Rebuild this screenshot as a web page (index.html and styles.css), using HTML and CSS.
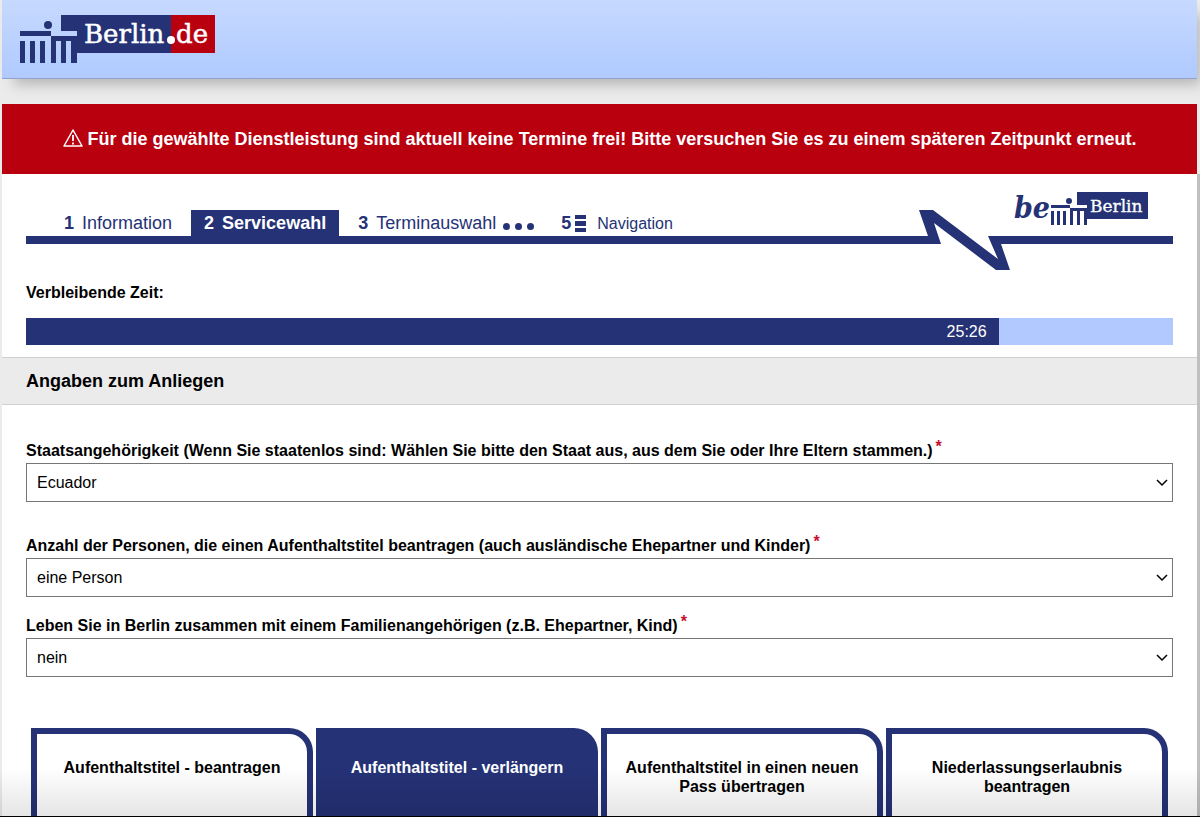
FILE: index.html
```html
<!DOCTYPE html>
<html lang="de">
<head>
    <meta charset="UTF-8">
    <meta name="viewport" content="width=device-width, initial-scale=1.0">
    <title>Servicewahl - Berlin.de</title>
    <link rel="stylesheet" href="styles.css">
</head>
<body>

    <header class="header">
        <a href="#" class="logo">
            <svg width="195" height="50" viewBox="0 0 195 50" role="img" aria-label="Berlin.de">
                <path class="blue" d="M41 1H151V39H57V49H51V27H46V49H41V27H36V49H31V22H57V17H41Z"/>
                <rect class="red" x="151" y="1" width="44" height="38"/>
                <circle class="blue" cx="28" cy="11" r="4"/>
                <path class="blue" d="M0 17H31V22H0ZM0 27H5V49H0ZM10 27H15V49H10ZM20 27H25V49H20Z"/>
                <text class="logo-text" x="64" y="29">Berlin</text>
                <circle class="white" cx="151" cy="26" r="4"/>
                <text class="logo-text" x="156" y="29">de</text>
            </svg>
        </a>
    </header>

    <div class="alert" role="alert">
        <svg class="alert-icon" width="20" height="20" viewBox="0 0 20 20" aria-hidden="true">
            <path d="M10 1L19 17H1Z" fill="none" stroke="#fff" stroke-width="1.500" stroke-linejoin="round"/>
            <path d="M10 6V12M10 13.500V15.500" stroke="#fff" stroke-width="1.800"/>
        </svg>
        <span>Für die gewählte Dienstleistung sind aktuell keine Termine frei! Bitte versuchen Sie es zu einem späteren Zeitpunkt erneut.</span>
    </div>

    <main class="content">
        <div class="progress-head">
            <nav class="steps">
                <a href="#" class="step"><b>1</b>Information</a>
                <a href="#" class="step active"><b>2</b>Servicewahl</a>
                <a href="#" class="step"><b>3</b>Terminauswahl</a>
                <span class="dots"><i></i><i></i><i></i></span>
                <a href="#" class="step step-nav"><b>5</b><svg width="11" height="17" viewBox="0 0 11 17" aria-hidden="true"><path class="blue" d="M0 0H11V4H0ZM0 6H11V11H0ZM0 13H11V17H0Z"/></svg>Navigation</a>
            </nav>
            <svg class="zigzag" width="91" height="60" viewBox="0 0 91 60" aria-hidden="true">
                <path class="blue" d="M0 26H9L0 0H14L79 49L69 26H91V34H82L91 60H77L15 13L22 34H0Z"/>
            </svg>
            <div class="be-berlin">
                <svg width="138" height="36" viewBox="0 0 138 36" role="img" aria-label="be Berlin">
                    <text class="be-text" x="3" y="28">be</text>
                    <path class="blue" d="M66 2H137V29H76V35H73V21H69V35H66V21H62V35H59V18H76V15H66Z"/>
                    <circle class="blue" cx="58" cy="11" r="3"/>
                    <path class="blue" d="M40 15H59V18H40ZM40 21H43V35H40ZM46 21H49V35H46ZM52 21H55V35H52Z"/>
                    <text class="be-name" x="79" y="22">Berlin</text>
                </svg>
            </div>
        </div>

        <div class="timer">
            <p class="timer-label">Verbleibende Zeit:</p>
            <div class="timer-bar">
                <div class="timer-fill" style="width: 84.8%;">25:26</div>
            </div>
        </div>

        <h2 class="section-title">Angaben zum Anliegen</h2>

        <form class="form">
            <div class="field field-wide">
                <label for="country">Staatsangehörigkeit (Wenn Sie staatenlos sind: Wählen Sie bitte den Staat aus, aus dem Sie oder Ihre Eltern stammen.)<span class="required">*</span></label>
                <div class="select-box">
                    <select id="country"><option>Ecuador</option></select>
                    <svg class="chevron" width="12" height="8" viewBox="0 0 12 8" aria-hidden="true"><path d="M1 1L6 6L11 1"/></svg>
                </div>
            </div>
            <div class="field">
                <label for="persons">Anzahl der Personen, die einen Aufenthaltstitel beantragen (auch ausländische Ehepartner und Kinder)<span class="required">*</span></label>
                <div class="select-box">
                    <select id="persons"><option>eine Person</option></select>
                    <svg class="chevron" width="12" height="8" viewBox="0 0 12 8" aria-hidden="true"><path d="M1 1L6 6L11 1"/></svg>
                </div>
            </div>
            <div class="field">
                <label for="family">Leben Sie in Berlin zusammen mit einem Familienangehörigen (z.B. Ehepartner, Kind)<span class="required">*</span></label>
                <div class="select-box">
                    <select id="family"><option>nein</option></select>
                    <svg class="chevron" width="12" height="8" viewBox="0 0 12 8" aria-hidden="true"><path d="M1 1L6 6L11 1"/></svg>
                </div>
            </div>

            <div class="services">
                <button type="button" class="service">Aufenthaltstitel - beantragen</button>
                <button type="button" class="service active">Aufenthaltstitel - verlängern</button>
                <button type="button" class="service">Aufenthaltstitel in einen neuen Pass übertragen</button>
                <button type="button" class="service">Niederlassungserlaubnis beantragen</button>
            </div>
        </form>
    </main>

</body>
</html>
```

FILE: styles.css
```css
* {
    box-sizing: border-box;
}
body {
    display: flex;
    flex-direction: column;
    min-height: 100vh;
    margin: 0;
    padding: 0 3px 0 2px;
    background-color: #ebebeb;
    font-family: "Liberation Sans", Arial, sans-serif;
    font-size: 16px;
    line-height: 19px;
    color: #000;
}
/* Schatten am unteren Rand */
body::after {
    content: "";
    position: fixed;
    left: 0;
    right: 0;
    bottom: 0;
    height: 48px;
    border-bottom: 1px solid #000;
    background: linear-gradient(rgba(0, 0, 0, 0), rgba(0, 0, 0, 0.1));
    pointer-events: none;
}
.blue {
    fill: #253276;
}
.red {
    fill: #b9000f;
}
.white {
    fill: #fff;
}

/* Kopfbereich */
.header {
    padding: 14px 18px;
    border-bottom: 1px solid #8fa3cc;
    background: linear-gradient(#c6d9ff, #b0caff);
    box-shadow: 8px 10px 12px -4px #b8b8b8;
}
.logo {
    display: block;
    width: 195px;
    height: 50px;
}
.logo-text {
    font-family: "DejaVu Serif", serif;
    font-size: 26px;
    fill: #fff;
    stroke: #fff;
    stroke-width: 0.5;
}
.alert {
    display: flex;
    align-items: center;
    justify-content: center;
    gap: 5px;
    margin-top: 25px;
    padding: 24px;
    background-color: #b9000f;
    color: #fff;
    font-size: 18px;
    font-weight: bold;
    line-height: 22px;
}
.alert-icon {
    flex: none;
}

/* Schritte */
.content {
    display: flex;
    flex: 1;
    flex-direction: column;
    background-color: #fff;
    box-shadow: 3px 0 0 #c0c0c0;
}
.progress-head {
    display: flex;
    align-items: flex-start;
    padding: 16px 24px 0;
}
.steps,
.be-berlin {
    height: 54px;
    border-bottom: 8px solid #253276;
}
.steps {
    display: flex;
    flex: 1;
    align-items: flex-end;
    padding-left: 25px;
}
.step {
    display: flex;
    align-items: center;
    gap: 8px;
    height: 26px;
    padding: 0 13px;
    margin-right: 6px;
    color: #253276;
    font-size: 18px;
    text-decoration: none;
}
.step.active {
    background-color: #253276;
    color: #fff;
    font-weight: bold;
}
.dots {
    display: flex;
    gap: 5px;
    padding-bottom: 6px;
    margin-left: -12px;
}
.dots i {
    width: 7px;
    height: 7px;
    border-radius: 50%;
    background-color: #253276;
}
.step-nav {
    gap: 4px;
    margin-left: 14px;
    font-size: 16px;
}
.step-nav b {
    font-size: 18px;
}
.step-nav svg {
    margin-right: 7px;
}
.zigzag {
    margin-top: 20px;
}
.be-berlin {
    width: 163px;
    padding-left: 1px;
}
.be-text {
    font-family: "DejaVu Serif Condensed", "DejaVu Serif", serif;
    font-size: 30px;
    font-style: italic;
    font-weight: bold;
    fill: #253276;
}
.be-name {
    font-family: "DejaVu Serif", serif;
    font-size: 17px;
    fill: #fff;
    stroke: #fff;
    stroke-width: 0.3;
}

/* Restzeit */
.timer {
    padding: 13px 24px 12px;
}
.timer-label {
    margin: 0 0 16px;
    font-weight: bold;
}
.timer-bar {
    background-color: #b2c9ff;
}
.timer-fill {
    padding: 4px 12px;
    background-color: #253276;
    color: #fff;
    text-align: right;
}
.section-title {
    margin: 0;
    padding: 12px 24px;
    border-top: 1px solid #d0d0d0;
    border-bottom: 1px solid #d0d0d0;
    background-color: #ebebeb;
    font-size: 18px;
    line-height: 22px;
}

/* Formular */
.form {
    display: flex;
    flex: 1;
    flex-direction: column;
    padding: 36px 24px 0;
}
.field {
    margin-bottom: 19px;
}
.field-wide {
    margin-bottom: 34px;
}
.field label {
    display: block;
    margin-bottom: 3px;
    font-weight: bold;
}
.required {
    position: relative;
    top: -4px;
    margin-left: 3px;
    color: #c8102e;
}
.select-box {
    position: relative;
}
.select-box select {
    display: block;
    width: 100%;
    height: 39px;
    padding: 0 10px;
    border: 1px solid #767676;
    border-radius: 0;
    background-color: #fff;
    color: #000;
    font: inherit;
    appearance: none;
}
.chevron {
    position: absolute;
    top: 16px;
    right: 5px;
    fill: none;
    stroke: #000;
    stroke-width: 1.5;
    pointer-events: none;
}
.services {
    display: grid;
    flex: 1;
    grid-template-columns: repeat(4, 1fr);
    gap: 3px;
    padding: 32px 5px 0;
}
.service {
    display: flex;
    align-items: flex-start;
    justify-content: center;
    padding: 24px 16px;
    border: 6px solid #253276;
    border-bottom: none;
    border-radius: 0 24px 0 0;
    background-color: #fff;
    color: #000;
    font: inherit;
    font-weight: bold;
    text-align: center;
    cursor: pointer;
}
.service.active {
    background-color: #253276;
    color: #fff;
}
```
